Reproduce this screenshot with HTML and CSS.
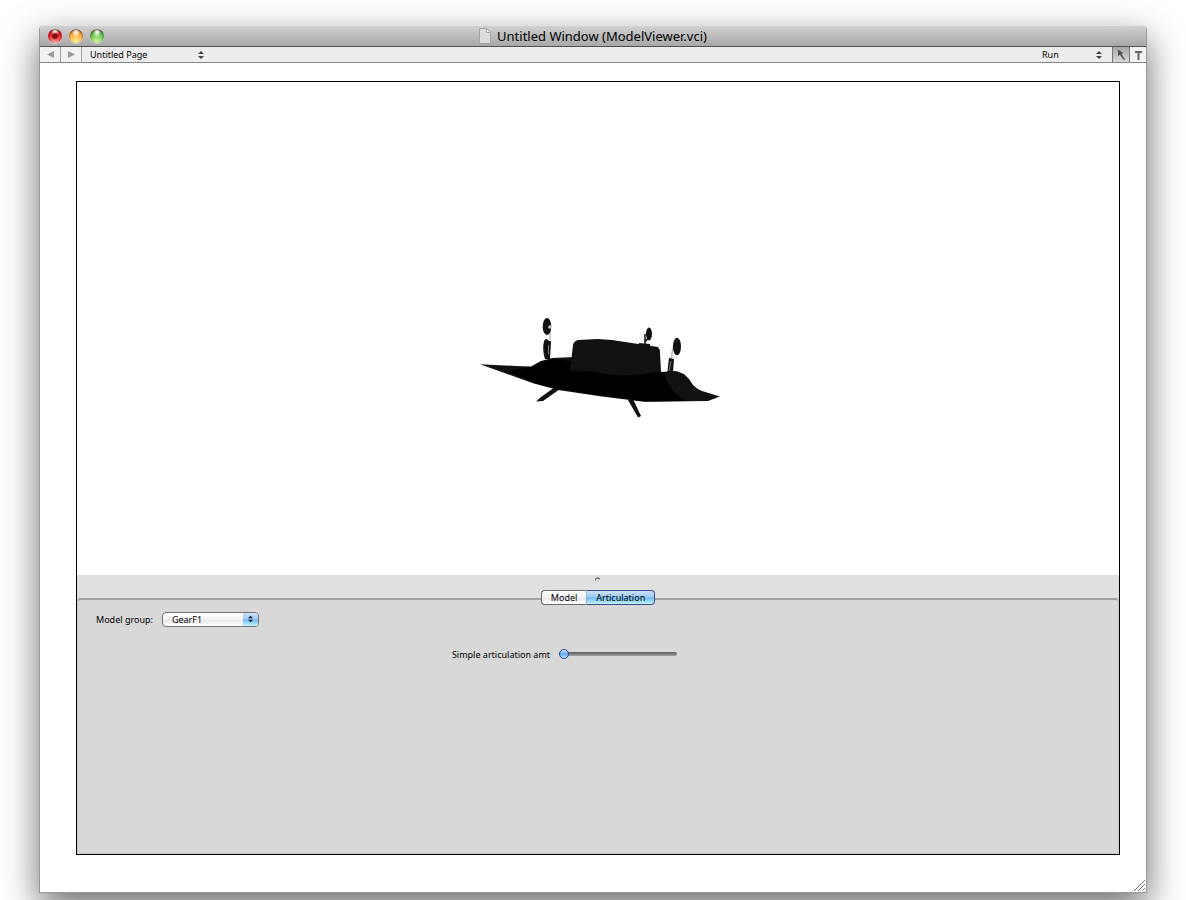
FILE: index.html
```html
<!DOCTYPE html>
<html lang="en">
<head>
<meta charset="utf-8">
<title>Untitled Window (ModelViewer.vci)</title>
<link rel="stylesheet" href="styles.css">
</head>
<body>
<main class="window">
  <header class="titlebar">
    <div class="lights">
      <button class="light close" aria-label="Close"></button>
      <button class="light minimize" aria-label="Minimize"></button>
      <button class="light zoom" aria-label="Zoom"></button>
    </div>
    <h1 class="title">
      <svg class="doc" width="12" height="16" viewBox="0 0 12 16" aria-hidden="true"><path d="M.5.5h7l4 4v11H.5z" fill="#dcdcdc" stroke="#a3a3a3"/><path d="M7.5.5v4h4z" fill="#f3f3f3" stroke="#a9a9a9"/></svg>
      <span>Untitled Window (ModelViewer.vci)</span>
    </h1>
  </header>
  <nav class="toolbar">
    <button class="tool" aria-label="Previous page"><svg width="7" height="7" viewBox="0 0 7 7"><path d="M7 0v7L0 3.500z" fill="#9b9b9b"/></svg></button>
    <button class="tool" aria-label="Next page"><svg width="7" height="7" viewBox="0 0 7 7"><path d="M0 0v7l7-3.500z" fill="#9b9b9b"/></svg></button>
    <span class="picker page">
      <select class="flat" aria-label="Page"><option>Untitled Page</option></select>
      <svg class="updown" width="6" height="8" viewBox="0 0 6 8"><path d="M3 0l3 3H0zM3 8L0 5h6z" fill="#444"/></svg>
    </span>
    <span class="picker mode">
      <select class="flat" aria-label="Mode"><option>Run</option></select>
      <svg class="updown" width="6" height="8" viewBox="0 0 6 8"><path d="M3 0l3 3H0zM3 8L0 5h6z" fill="#444"/></svg>
    </span>
    <button class="tool arrow" aria-label="Select"><svg width="9" height="12" viewBox="0 0 9 12"><path d="M1 .5v6.500l1.800-1.200L7 11.200l1-.7-3.700-5.700 2.200-.6z" fill="#505050"/></svg></button>
    <button class="tool text" aria-label="Text"><svg width="9" height="10" viewBox="0 0 9 10"><path d="M1 1h7v2H5.500v7h-2V3H1z" fill="#666"/></svg></button>
  </nav>
  <section class="stage">
    <div class="viewer">
      <svg class="model" viewBox="77 82 1042 493" role="img" aria-label="Aircraft model">
        <g fill="#111">
          <path d="M555 387l-14 10-5 4.500 7-.5 17-12zM628 400l5-1 8 17-3 1.500z"/>
          <path d="M480 364.300L516 366l15 .5 10-5.500 11-3 23-1 85 15 16-1 8 3q5 4 9 11 4 4 9 6l18 5.500-12 4.500-64 .8-42-5.300-44-6.500-24-6.500z"/>
        </g>
        <path d="M507 371l24-4 10-5.500 14-2.500 90 13 19 0q4 20 23 29l-41 .5-42-5.500-46-7-24-6z" fill="#000"/>
        <path d="M570 371l3-26q1-4 5-5l20-1 14 1 46 7q2 2 2 6l1 19-8 .5-22 3q-20 0-40-4z" fill="#101110"/>
        <path d="M639 343l11 1v3l-11-1z" fill="#111"/>
        <path d="M645 345v-11M649 337l-4 5" stroke="#111" stroke-width="1.500"/>
        <path d="M550 327v13M674 343l-3 16" stroke="#bbb" stroke-width="1.500"/>
        <g fill="#111">
          <ellipse cx="547" cy="326.500" rx="4.300" ry="8.500"/>
          <path d="M544 341q2-4 5 0h2l-1 18h-5q-3-9-1-18z"/>
          <ellipse cx="649" cy="334" rx="3" ry="6.500"/>
          <ellipse cx="677" cy="346.500" rx="4" ry="8.800"/>
          <path d="M669 358l5 1-1 13-6 3z"/>
        </g>
        <path d="M548.500 345v9M671 361l-2 10" stroke="#999" stroke-width=".8"/>
        <circle cx="550" cy="327" r="1.800" fill="#ccc"/>
      </svg>
    </div>
    <div class="panel">
      <div class="splitter"><svg width="5" height="4" viewBox="0 0 5 4"><path d="M.5 3.500q0-2.500 2-2.500t2 1.500" fill="none" stroke="#777" stroke-width="1.300"/></svg></div>
      <div class="tabs" role="tablist">
        <button class="tab" role="tab" aria-selected="false">Model</button>
        <button class="tab active" role="tab" aria-selected="true">Articulation</button>
      </div>
      <div class="pane" role="tabpanel">
        <div class="row">
          <label class="label" for="group">Model group:</label>
          <span class="popup">
            <select class="popup-select" id="group"><option>GearF1</option></select>
            <span class="cap"><svg width="5" height="8" viewBox="0 0 6 8"><path d="M3 0l3 3H0zM3 8L0 5h6z" fill="#0a1a30"/></svg></span>
          </span>
        </div>
        <div class="row slider-row">
          <label class="label" for="amount">Simple articulation amt</label>
          <input class="slider" id="amount" type="range" min="0" max="100" value="0">
        </div>
      </div>
    </div>
  </section>
  <svg class="grip" width="11" height="11" viewBox="0 0 11 11"><path d="M0 11L11 0M4 11l7-7M8 11l3-3" stroke="#777" fill="none"/></svg>
</main>
</body>
</html>
```
FILE: styles.css
```css
* { box-sizing: border-box; }
body {
  margin: 0;
  height: 100vh;
  padding: 25px 39px 7px;
  display: flex;
  overflow: hidden;
  background: #fff;
  font-family: "Noto Sans", "Open Sans", sans-serif;
  font-size: 9px;
  color: #000;
}
button, select { font: inherit; color: inherit; padding: 0; margin: 0; border: 0; background: none; }
svg { display: block; flex: none; }

.window {
  flex: 1;
  min-width: 0;
  position: relative;
  display: flex;
  flex-direction: column;
  background: #fff;
  border: 1px solid #999;
  border-top: 0;
  border-radius: 5px 5px 0 0;
  box-shadow: 0 14px 36px rgba(0, 0, 0, .58);
}
.titlebar {
  height: 22px;
  display: flex;
  align-items: center;
  justify-content: center;
  position: relative;
  background: linear-gradient(#d0d0d0, #a8a8a8);
  border-top: 1px solid #e2e2e2;
  border-bottom: 1px solid #515151;
  border-radius: 5px 5px 0 0;
}
.lights { position: absolute; left: 8px; top: 3px; display: flex; gap: 7px; }
.light {
  width: 14px;
  height: 14px;
  border-radius: 50%;
  box-shadow: inset 0 1px 2px rgba(60, 20, 0, .8), 0 1px 0 rgba(255, 255, 255, .5);
}
.close { background: radial-gradient(circle at 50% 50%, #7c0d0d 0 2px, transparent 4px), radial-gradient(ellipse at 50% 12%, #fff 0 1px, transparent 4px), radial-gradient(circle at 50% 95%, #ffa9a4, #f0202a 55%, #c8101c); }
.minimize { background: radial-gradient(ellipse at 50% 12%, #fff 0 1px, transparent 4px), radial-gradient(circle at 50% 95%, #fff79a, #fba838 60%, #e0681c); }
.zoom { background: radial-gradient(ellipse at 50% 12%, #fff 0 1px, transparent 4px), radial-gradient(circle at 50% 95%, #d8fba0, #62c052 60%, #2c8a34); }
.title { margin: 0; display: flex; align-items: center; gap: 6px; font-size: 13px; line-height: 20px; font-weight: 400; }

.toolbar {
  height: 16px;
  display: flex;
  align-items: stretch;
  background: #ededed;
  border-bottom: 1px solid #858585;
}
.tool {
  width: 21px;
  display: flex;
  align-items: center;
  justify-content: center;
  background: #f2f2f2;
  border-right: 1px solid #a0a0a0;
}
.picker { display: flex; align-items: center; position: relative; }
.flat { appearance: none; width: 100%; height: 15px; line-height: 14px; padding-top: 1px; outline: 0; }
.updown { position: absolute; right: 0; pointer-events: none; }
.page { width: 114px; margin-left: 8px; }
.mode { width: 60px; margin-left: auto; margin-right: 10px; }
.arrow { width: 18px; background: linear-gradient(#a5a5a5, #d8d8d8); border-left: 1px solid #777; border-right-color: #777; }
.text { width: 16px; border-right: 0; }

.stage {
  flex: 1;
  min-height: 0;
  margin: 18px 26px 37px 36px;
  display: flex;
  flex-direction: column;
  border: 1px solid #000;
}
.viewer { flex: 1; min-height: 0; }
.model { width: 100%; height: 100%; }
.panel { display: flex; flex-direction: column; background: #e0e0e0; }
.splitter { height: 15px; padding: 2px 2px 0 0; display: flex; justify-content: center; }
.tabs { display: flex; align-self: center; position: relative; z-index: 1; margin-bottom: -7px; }
.tab {
  height: 15px;
  line-height: 13px;
  padding: 0 9px;
  border: 1px solid #6a6a6a;
  border-right: 0;
  border-radius: 4px 0 0 4px;
  background: linear-gradient(#fff, #f3f3f3 50%, #e8e8e8 51%, #fff);
}
.tab.active {
  border: 1px solid #3f4a8c;
  border-left-color: #8cb4dc;
  border-radius: 0 4px 4px 0;
  background: linear-gradient(#cfe2f8, #9bcaf4 48%, #73b8f3 52%, #bff6ff);
}
.pane {
  height: 256px;
  padding: 10px 18px;
  background: #d8d8d8;
  border: 1px solid #c6c6c6;
  border-top: 2px solid #a0a0a0;
  border-radius: 4px;
}
.row { display: flex; align-items: center; gap: 9px; height: 18px; }
.label { line-height: 18px; padding-top: 1px; white-space: nowrap; }
.popup {
  width: 97px;
  height: 15px;
  display: flex;
  position: relative;
  border: 1px solid #747474;
  border-radius: 4px;
  overflow: hidden;
  background: linear-gradient(#fff, #f3f3f3 50%, #e6e6e6 51%, #fff);
}
.popup-select { appearance: none; width: 100%; height: 13px; line-height: 13px; padding-left: 9px; outline: 0; }
.cap {
  position: absolute;
  inset: 0 0 0 auto;
  width: 15px;
  display: flex;
  align-items: center;
  justify-content: center;
  pointer-events: none;
  background: linear-gradient(#cfe2f8, #9bcaf4 48%, #73b8f3 52%, #bff6ff);
}
.slider-row { justify-content: center; margin-top: 17px; padding-right: 67px; }
.slider { appearance: none; width: 118px; height: 12px; margin: 0; background: none; }
.slider::-webkit-slider-runnable-track {
  height: 4px;
  border-radius: 2px;
  background: linear-gradient(#5c5c5c, #a2a2a2);
}
.slider::-webkit-slider-thumb {
  appearance: none;
  width: 10px;
  height: 10px;
  margin-top: -3px;
  border: 1px solid #2c3f96;
  border-radius: 50%;
  background: linear-gradient(#dfeeff, #62a5ee 50%, #b6f2ff);
}
.grip { position: absolute; right: 1px; bottom: 1px; }
```
